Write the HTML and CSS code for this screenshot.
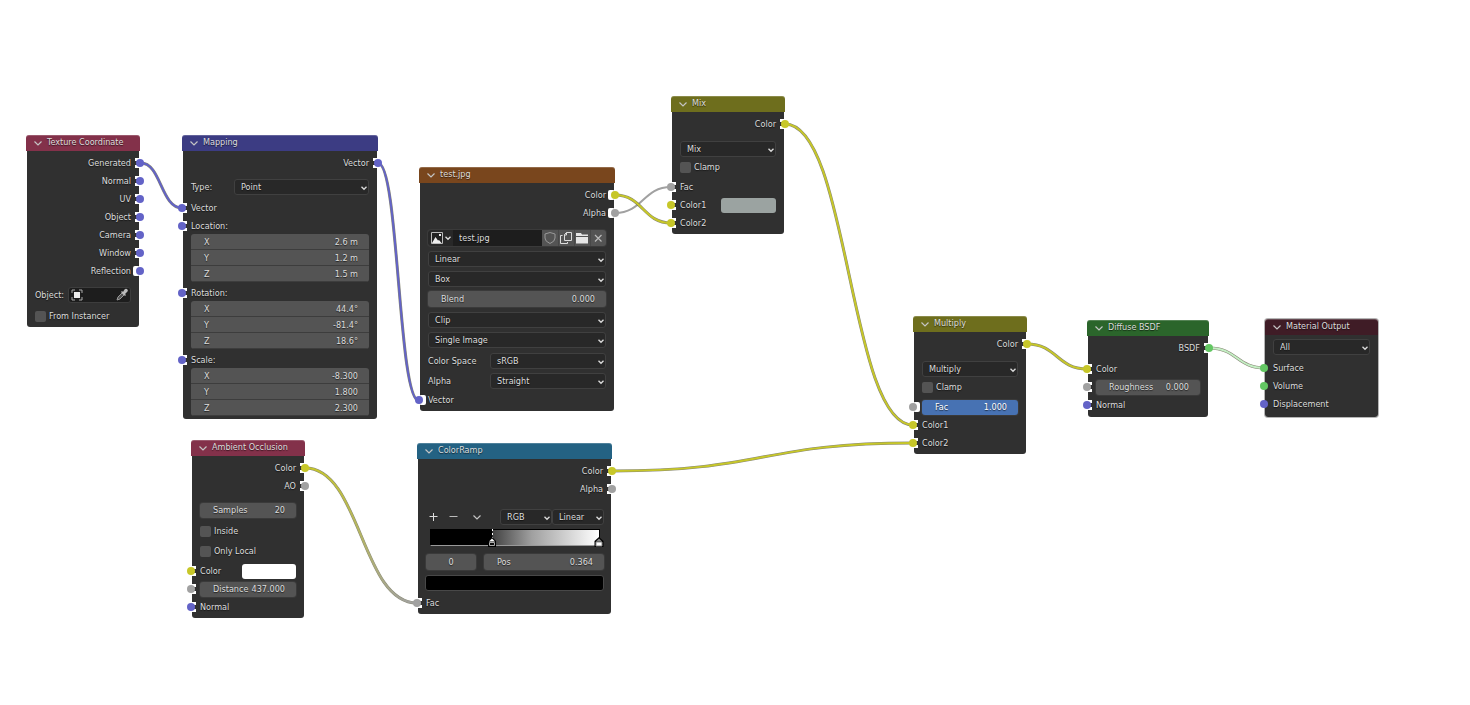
FILE: index.html
```html
<!DOCTYPE html>
<html lang="en">
<head>
<meta charset="utf-8">
<title>Shader Editor</title>
<link rel="stylesheet" href="styles.css">
</head>
<body>
<svg class="defs" aria-hidden="true">
  <symbol id="chev" viewBox="0 0 10 10"><path d="M1.500 3.500 5 7l3.500-3.500" fill="none" stroke="currentColor" stroke-width="1.200"/></symbol>
  <symbol id="drop" viewBox="0 0 8 8"><path d="M1.500 2.700 4 5.300l2.500-2.600" fill="none" stroke="currentColor" stroke-width="1.300"/></symbol>
</svg>
<main class="canvas">
  <svg class="wires" aria-hidden="true">
    <defs>
      <linearGradient id="fade" gradientUnits="userSpaceOnUse" x1="305" y1="468" x2="417" y2="603"><stop offset="0" stop-color="#c7c729"/><stop offset="1" stop-color="#a1a1a1"/></linearGradient>
      <path id="w1" d="M141 163C161 163 161 208 182 208"/>
      <path id="w2" d="M378 163C399 163 398 401 419 401"/>
      <path id="w3" d="M615 213C643 213 643 187 671 187"/>
      <path id="w4" d="M615 195C643 195 643 223 671 223"/>
      <path id="w5" d="M785 124C849 124 849 425 913 425"/>
      <path id="w6" d="M613 471C763 471 763 443 913 443"/>
      <path id="w7" d="M305 468C361 468 361 603 417 603"/>
      <path id="w8" d="M1027 344C1057 344 1057 369 1087 369"/>
      <path id="w9" d="M1209 348C1237 348 1237 368 1265 368"/>
    </defs>
    <g class="wire-edge"><use href="#w1"/><use href="#w2"/><use href="#w5"/><use href="#w6"/><use href="#w7"/><use href="#w8"/><use href="#w9"/></g>
    <g class="wire"><use href="#w1" stroke="#6363c7"/><use href="#w2" stroke="#6363c7"/><use href="#w3" stroke="#a1a1a1"/></g>
    <g class="wire-edge"><use href="#w4"/></g>
    <g class="wire"><use href="#w4" stroke="#c7c729"/><use href="#w5" stroke="#c7c729"/><use href="#w6" stroke="#c7c729"/><use href="#w7" stroke="url(#fade)"/><use href="#w8" stroke="#c7c729"/><use href="#w9" stroke="#c4efc4"/></g>
  </svg>

  <section class="node small texcoord">
    <h2 class="head"><svg class="chev"><use href="#chev"/></svg>Texture Coordinate</h2>
    <div class="body">
      <div class="row out">Generated<i class="socket vec"></i></div>
      <div class="row out">Normal<i class="socket vec"></i></div>
      <div class="row out">UV<i class="socket vec"></i></div>
      <div class="row out">Object<i class="socket vec"></i></div>
      <div class="row out">Camera<i class="socket vec"></i></div>
      <div class="row out">Window<i class="socket vec"></i></div>
      <div class="row out">Reflection<i class="socket vec open"></i></div>
      <div class="row gap6">
        <label class="obj-label" for="obj">Object:</label>
        <span class="objfield">
          <svg class="icon14" viewBox="0 0 14 14"><path d="M2 5V2h3M9 2h3v3M12 9v3H9M5 12H2V9" fill="none" stroke="#aaa"/><path d="M4 4h6v6H4z" fill="#eee"/></svg>
          <input id="obj" type="text">
          <button class="plain" aria-label="Pick object"><svg class="icon14" viewBox="0 0 14 14"><path d="m2 12 1-3 4-4 2 2-4 4z" fill="#555" stroke="#999"/><path d="m6 4 4 4 1-1-1-1 2.500-2.500q1-1.500-.500-2.500-1.500-.800-2.500.500L8 4 7 3z" fill="#bbb"/></svg></button>
        </span>
      </div>
      <label class="row gap3"><input class="check" type="checkbox">From Instancer</label>
    </div>
  </section>

  <section class="node wide mapping">
    <h2 class="head"><svg class="chev"><use href="#chev"/></svg>Mapping</h2>
    <div class="body">
      <div class="row out">Vector<i class="socket vec"></i></div>
      <div class="row gap6"><label class="type-label" for="mtype">Type:</label><span class="select"><select id="mtype"><option>Point</option></select><svg><use href="#drop"/></svg></span></div>
      <div class="row gap3">Vector<i class="socket vec"></i></div>
      <div class="row tight">Location:<i class="socket vec"></i></div>
      <div class="triple">
        <label class="num">X<input value="2.6 m"></label>
        <label class="num">Y<input value="1.2 m"></label>
        <label class="num">Z<input value="1.5 m"></label>
      </div>
      <div class="row tight gap2">Rotation:<i class="socket vec"></i></div>
      <div class="triple">
        <label class="num">X<input value="44.4°"></label>
        <label class="num">Y<input value="-81.4°"></label>
        <label class="num">Z<input value="18.6°"></label>
      </div>
      <div class="row tight gap2">Scale:<i class="socket vec"></i></div>
      <div class="triple">
        <label class="num">X<input value="-8.300"></label>
        <label class="num">Y<input value="1.800"></label>
        <label class="num">Z<input value="2.300"></label>
      </div>
    </div>
  </section>

  <section class="node wide image">
    <h2 class="head"><svg class="chev"><use href="#chev"/></svg>test.jpg</h2>
    <div class="body">
      <div class="row out">Color<i class="socket col open"></i></div>
      <div class="row out">Alpha<i class="socket val open"></i></div>
      <div class="filebar">
        <button class="browse" aria-label="Browse image"><svg class="pic" viewBox="0 0 12 12"><path d="M.500.500h11v11H.500z" fill="#222" stroke="#bbb"/><path d="m1 11 3.500-6L7 8.500 8 8l2.500 3z" fill="#eee"/><path d="M8 2h2v2H8z" fill="#eee"/></svg><svg class="drop"><use href="#drop"/></svg></button>
        <input class="fname" aria-label="Image name" value="test.jpg">
        <button class="tool" aria-label="Fake user"><svg class="icon14" viewBox="0 0 14 14"><path d="M7 1.500 12 3v4q0 3.500-5 5.500Q2 10.500 2 7V3z" fill="none" stroke="#999"/></svg></button>
        <button class="tool" aria-label="Duplicate"><svg class="icon14" viewBox="0 0 14 14"><path d="M7.500 1.500h5v8h-7v-6zm0 0v2.500H5.500M3.500 4.500h-2v8h7V11" fill="none" stroke="#ddd"/></svg></button>
        <button class="tool" aria-label="Open"><svg class="icon14" viewBox="0 0 14 14"><path d="M1 2h5l1 1.500h6V5H1zM1 6h12v6.500H1z" fill="#e6e6e6"/></svg></button>
        <button class="tool" aria-label="Unlink"><svg class="icon14" viewBox="0 0 14 14"><path d="m4 4 6.500 6.500m0-6.500L4 10.500" fill="none" stroke="#bbb" stroke-width="1.200"/></svg></button>
      </div>
      <div class="stack">
        <span class="select"><select aria-label="Interpolation"><option>Linear</option></select><svg><use href="#drop"/></svg></span>
      </div>
      <div class="stack">
        <span class="select"><select aria-label="Projection"><option>Box</option></select><svg><use href="#drop"/></svg></span>
        <label class="num solo">Blend<input value="0.000"></label>
      </div>
      <div class="stack">
        <span class="select"><select aria-label="Extension"><option>Clip</option></select><svg><use href="#drop"/></svg></span>
        <span class="select"><select aria-label="Source"><option>Single Image</option></select><svg><use href="#drop"/></svg></span>
      </div>
      <div class="stack">
        <div class="prop"><label for="cs">Color Space</label><span class="select"><select id="cs"><option>sRGB</option></select><svg><use href="#drop"/></svg></span></div>
        <div class="prop"><label for="al">Alpha</label><span class="select"><select id="al"><option>Straight</option></select><svg><use href="#drop"/></svg></span></div>
      </div>
      <div class="row gap2">Vector<i class="socket vec open"></i></div>
    </div>
  </section>

  <section class="node small mix">
    <h2 class="head"><svg class="chev"><use href="#chev"/></svg>Mix</h2>
    <div class="body">
      <div class="row out">Color<i class="socket col"></i></div>
      <div class="row gap7"><span class="select"><select aria-label="Blend mode"><option>Mix</option></select><svg><use href="#drop"/></svg></span></div>
      <label class="row"><input class="check" type="checkbox">Clamp</label>
      <div class="row gap2">Fac<i class="socket val"></i></div>
      <div class="row"><label for="c1">Color1</label><button id="c1" class="swatch grey"></button><i class="socket col"></i></div>
      <div class="row">Color2<i class="socket col"></i></div>
    </div>
  </section>

  <section class="node small multiply">
    <h2 class="head"><svg class="chev"><use href="#chev"/></svg>Multiply</h2>
    <div class="body">
      <div class="row out">Color<i class="socket col"></i></div>
      <div class="row gap7"><span class="select"><select aria-label="Blend mode"><option>Multiply</option></select><svg><use href="#drop"/></svg></span></div>
      <label class="row"><input class="check" type="checkbox">Clamp</label>
      <div class="row gap2"><label class="num solo full">Fac<input value="1.000"></label><i class="socket val open"></i></div>
      <div class="row">Color1<i class="socket col"></i></div>
      <div class="row">Color2<i class="socket col"></i></div>
    </div>
  </section>

  <section class="node small ao">
    <h2 class="head"><svg class="chev"><use href="#chev"/></svg>Ambient Occlusion</h2>
    <div class="body">
      <div class="row out">Color<i class="socket col"></i></div>
      <div class="row out">AO<i class="socket val"></i></div>
      <div class="row gap6"><label class="num solo">Samples<input value="20"></label></div>
      <label class="row gap3"><input class="check" type="checkbox">Inside</label>
      <label class="row gap2"><input class="check" type="checkbox">Only Local</label>
      <div class="row gap2"><label for="aoc">Color</label><button id="aoc" class="swatch white"></button><i class="socket col"></i></div>
      <div class="row"><label class="num solo">Distance<input value="437.000"></label><i class="socket val"></i></div>
      <div class="row">Normal<i class="socket vec"></i></div>
    </div>
  </section>

  <section class="node wide ramp">
    <h2 class="head"><svg class="chev"><use href="#chev"/></svg>ColorRamp</h2>
    <div class="body">
      <div class="row out">Color<i class="socket col"></i></div>
      <div class="row out">Alpha<i class="socket val"></i></div>
      <div class="row rampbar">
        <button class="plain" aria-label="Add stop"><svg viewBox="0 0 10 10"><path d="M5.500 1v8M1.500 4.500h8" stroke="#ddd"/></svg></button>
        <button class="plain" aria-label="Remove stop"><svg viewBox="0 0 10 10"><path d="M1.500 4.500h8" stroke="#bbb"/></svg></button>
        <button class="plain" aria-label="Ramp tools"><svg><use href="#chev"/></svg></button>
        <span class="joined">
          <span class="select"><select aria-label="Color mode"><option>RGB</option></select><svg><use href="#drop"/></svg></span>
          <span class="select"><select aria-label="Ramp interpolation"><option>Linear</option></select><svg><use href="#drop"/></svg></span>
        </span>
      </div>
      <div class="gradient">
        <span class="track"></span>
        <svg class="handle mid" viewBox="0 0 10 18"><path d="M5.500 0v10" stroke="#fff" stroke-dasharray="2 2"/><path d="M5 8 9 12v6H1v-6z" fill="#000"/><path d="m5 9.500 3 3H2z" fill="#fff"/><path d="M2.500 13.500h5v3h-5z" fill="#111" stroke="#aaa"/></svg>
        <svg class="handle end" viewBox="0 0 10 18"><path d="M5.500 0v10" stroke="#000"/><path d="M5 8 9.500 12v6h-9v-6z" fill="#000"/><path d="m5 9.500 3 3H2z" fill="#888"/><path d="M2 13h6v4H2z" fill="#fff" stroke="#888"/></svg>
      </div>
      <div class="pos">
        <label class="index"><input aria-label="Stop index" value="0"></label>
        <label class="num solo">Pos<input value="0.364"></label>
      </div>
      <button class="stopcolor" aria-label="Stop color"></button>
      <div class="row gap3">Fac<i class="socket val"></i></div>
    </div>
  </section>

  <section class="node medium diffuse">
    <h2 class="head"><svg class="chev"><use href="#chev"/></svg>Diffuse BSDF</h2>
    <div class="body">
      <div class="row out">BSDF<i class="socket shd"></i></div>
      <div class="row gap3">Color<i class="socket col"></i></div>
      <div class="row"><label class="num solo">Roughness<input value="0.000"></label><i class="socket val"></i></div>
      <div class="row">Normal<i class="socket vec"></i></div>
    </div>
  </section>

  <section class="node small output">
    <h2 class="head"><svg class="chev"><use href="#chev"/></svg>Material Output</h2>
    <div class="body">
      <div class="row"><span class="select"><select aria-label="Target"><option>All</option></select><svg><use href="#drop"/></svg></span></div>
      <div class="row gap3">Surface<i class="socket shd bare"></i></div>
      <div class="row">Volume<i class="socket shd bare"></i></div>
      <div class="row">Displacement<i class="socket vec bare"></i></div>
    </div>
  </section>
</main>
</body>
</html>
```
FILE: styles.css
```css
* { box-sizing: border-box; }
body { margin: 0; background: #fff; }
body, input, select, button { font: 9px/16px "DejaVu Sans Condensed", "Noto Sans", sans-serif; color: #dcdcdc; }
input, select, button { margin: 0; padding: 0; border: 0; background: none; outline: none; }
.defs { position: absolute; width: 0; height: 0; }
.canvas { position: relative; min-height: 100vh; overflow: hidden; }
.wires { position: absolute; inset: 0; width: 100%; height: 100%; fill: none; }
.wire { stroke-width: 2; }
.wire-edge { stroke: #55553c; stroke-width: 3; opacity: .7; }

/* Nodes */
.node { position: absolute; text-shadow: 0 1px 1px rgba(0, 0, 0, .6); }
.small { width: 112px; }
.medium { width: 120px; }
.wide { width: 194px; }
.texcoord { left: 27px; top: 135px; }
.mapping { left: 183px; top: 135px; }
.image { left: 420px; top: 167px; }
.mix { left: 672px; top: 96px; }
.multiply { left: 914px; top: 316px; }
.ao { left: 192px; top: 440px; }
.ramp { left: 418px; top: 443px; }
.diffuse { left: 1088px; top: 320px; }
.output { left: 1265px; top: 319px; }
.wide.ramp { width: 193px; }
.small.output { width: 113px; }

.head { display: flex; align-items: center; gap: 4px; height: 16px; margin: 0 -1px; padding: 0 0 1px 7px; border-radius: 3px 3px 0 0; font-size: 9px; font-weight: 400; line-height: 15px; box-shadow: inset 0 1px rgba(255, 255, 255, .2); }
.chev { width: 10px; height: 10px; color: #c4c4c4; }
.texcoord .head, .ao .head { background: #83314a; }
.mapping .head { background: #3c3c83; }
.image .head { background: #79461d; }
.mix .head, .multiply .head { background: #6e6e1d; }
.ramp .head { background: #246283; }
.diffuse .head { background: #2b652b; }
.output .head { background: #3f1c26; }

.body { padding: 3px 0 2px; background: #303030; border-radius: 0 0 3px 3px; }
.mapping .body { padding-bottom: 3px; }
.diffuse .body { padding-bottom: 3px; }
.output .body { padding-bottom: 4px; }
.output { box-shadow: 0 0 0 1px #b5b5b5; border-radius: 3px; }
.output .head { margin: 0; }

.row { position: relative; display: flex; align-items: center; height: 18px; padding: 0 8px; }
.tight { height: 17px; }
.out { justify-content: flex-end; }
.gap2 { margin-top: 2px; }
.gap3 { margin-top: 3px; }
.gap6 { margin-top: 6px; }
.gap7 { margin-top: 7px; }

/* Sockets sit across the node's edge */
.node, .socket { isolation: isolate; }
.socket { position: absolute; left: -5px; top: 5px; width: 8px; height: 8px; }
.out .socket { left: auto; right: -5px; }
.socket::before { content: ""; position: absolute; z-index: -1; left: 4px; top: -1px; width: 5px; height: 10px; background: linear-gradient(#fff 3px, #303030 3px 7px, #fff 7px); }
.out .socket::before { left: auto; right: 4px; }
.socket::after { content: ""; position: absolute; inset: 0; border-radius: 50%; background: var(--c); }
.socket.open::before { width: 7px; background: #fff; border-radius: 2px; }
.socket.bare::before { display: none; }
.vec { --c: #6363c7; }
.col { --c: #c7c729; }
.val { --c: #a1a1a1; }
.shd { --c: #63c763; }

/* Controls */
.select { position: relative; display: flex; flex: 1; min-width: 0; height: 16px; }
.select select { appearance: none; width: 100%; height: 16px; padding: 0 12px 0 6px; border: 1px solid #404040; border-radius: 3px; background: #282828; line-height: 14px; text-shadow: inherit; }
.select svg { position: absolute; right: 1px; top: 5px; width: 8px; height: 8px; pointer-events: none; }
.num { display: flex; flex: 1; min-width: 0; height: 16px; padding: 0 11px 0 13px; line-height: 16px; background: #545454; }
.num input { flex: 1; min-width: 0; width: 0; line-height: 16px; text-align: right; text-shadow: inherit; }
.solo { border-radius: 3px; box-shadow: 0 0 0 1px #3a3a3a; }
.full { background: #4772b3; color: #fff; }
.full input { color: #fff; }
.row .num { height: 15px; line-height: 15px; }
.row .num input { line-height: 15px; }
.triple { margin: 0 8px; border-radius: 3px; overflow: hidden; }
.triple .num { box-shadow: inset 0 -1px #3d3d3d; }
.check { appearance: none; width: 11px; height: 11px; margin-right: 3px; border-radius: 2px; background: #545454; }
.type-label { width: 43px; }
.obj-label { width: 33px; }
.objfield { display: flex; flex: 1; align-items: center; min-width: 0; height: 16px; padding: 0 1px; border: 1px solid #3d3d3d; border-radius: 3px; background: #1d1d1d; }
.objfield input { flex: 1; min-width: 0; width: 0; }
.icon14 { display: block; width: 14px; height: 14px; }
.plain { display: flex; }
.swatch { height: 15px; margin-left: auto; border-radius: 3px; }
.grey { width: 55px; background: #9ba3a1; }
.white { width: 54px; background: #fff; }

.filebar { display: flex; height: 16px; margin: 8px 8px 0; border-radius: 3px; overflow: hidden; background: #545454; box-shadow: 0 0 0 1px #3a3a3a; }
.browse { display: flex; align-items: center; gap: 1px; width: 25px; padding-left: 3px; background: #282828; }
.pic { width: 12px; height: 12px; }
.drop { width: 8px; height: 8px; }
.fname { flex: 1; min-width: 0; width: 0; padding-left: 6px; background: #1d1d1d; text-shadow: inherit; }
.tool { display: grid; place-items: center; width: 16px; }
.tool + .tool { box-shadow: inset 1px 0 #484848; }
.stack { display: grid; gap: 4px; margin: 5px 8px 0; }
.stack + .stack { margin-top: 4px; }
.stack + .stack + .stack { margin-top: 5px; }
.prop { display: grid; grid-template-columns: 62px 1fr; align-items: center; height: 16px; }

.rampbar { height: 17px; margin-top: 10px; padding: 0 7px 0 10px; gap: 10px; }
.rampbar .plain svg { width: 10px; height: 10px; color: #c4c4c4; }
.rampbar .plain + .plain + .plain { margin-left: 4px; }
.joined { display: flex; flex: 1; margin-left: 8px; }
.joined .select select { padding-right: 8px; }
.gradient { position: relative; height: 18px; margin: 4px 11px 0 12px; }
.track { display: block; height: 17px; border: 1px solid #000; border-bottom-color: #999; background: linear-gradient(90deg, #000 36%, #444 37%, #a0a0a0 60%, #fff); }
.handle { position: absolute; top: 0; width: 10px; height: 18px; }
.mid { left: 57px; }
.end { right: -4px; }
.pos { display: grid; grid-template-columns: 50px 1fr; gap: 8px; margin: 7px 7px 0 8px; }
.index { border-radius: 3px; background: #545454; box-shadow: 0 0 0 1px #3a3a3a; }
.index input { display: block; width: 100%; text-align: center; text-shadow: inherit; }
.stopcolor { display: block; width: calc(100% - 14px); height: 16px; margin: 5px 7px 0; border: 1px solid #484848; border-radius: 3px; background: #000; }
```
